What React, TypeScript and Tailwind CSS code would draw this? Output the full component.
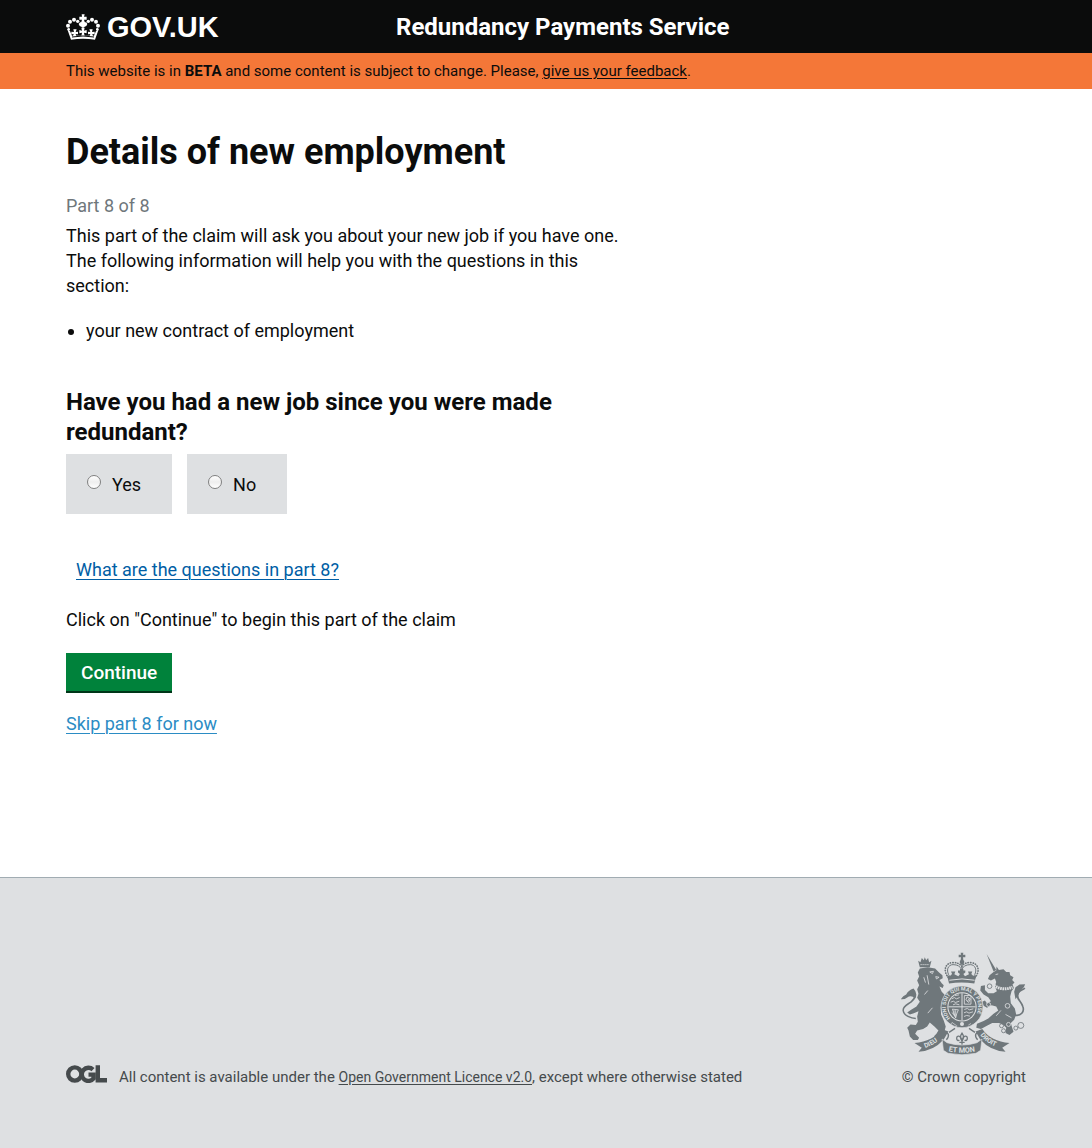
import type { ReactNode } from 'react';

function Crown() {
  return (
    <svg viewBox="0 0 102 78" className="h-[26px] w-[34px] shrink-0" fill="#fff" aria-hidden="true">
      <path d="M47 1h9l-2 7h8v9h-8l3 10h-12l3-10h-8v-9h8z" />
      <path d="M42 25h19l3 5-3 6-5 2-5 4-5-4-5-2-3-6z" />
      {[[35, 22, 5], [24, 17, 6], [12, 23, 6], [6, 35, 6], [8, 46, 4], [67, 22, 5], [78, 17, 6], [90, 23, 6], [96, 35, 6], [94, 46, 4]].map(([x, y, r]) => (
        <circle key={`${x}-${y}`} cx={x} cy={y} r={r} />
      ))}
      <path d="M4 46l8 5 6 14h66l6-14 8-5-11 31q-36-6-72 0z" />
      <path d="M46 41h10l-2 9 8-2v10l-8-2 2 11h-10l2-11-8 2v-10l8 2z" />
      <path d="M22 46h10l-3 8 7-1v8l-7-1 2 6h-10l2-6-7 1v-8l8 1zM80 46h-10l3 8-7-1v8l7-1-2 6h10l-2-6 7 1v-8l-8 1z" />
      <path d="M18 69q33-6 66 0" fill="none" stroke="#0b0c0c" strokeWidth="3" />
    </svg>
  );
}

function OglLogo() {
  return (
    <svg viewBox="0 0 41 18" className="h-[18px] w-[41px] shrink-0" role="img" aria-label="OGL">
      <g fill="none" stroke="#454a4c" strokeWidth="4.4">
        <circle cx="8.8" cy="9" r="6.6" />
        <path d="M27 4.6A6.6 6.6 0 1 0 27.6 13.4V9.6H22.5" />
        <path d="M31.8 0.3V15.2H41" />
      </g>
    </svg>
  );
}

function RoyalArms() {
  return (
    <svg viewBox="18 22 375 310" className="h-[103px] w-[125px]" fill="#6f777b" role="img" aria-label="Royal coat of arms">
      {/* lion */}
      <path d="M74 68l-5-20 7 5 4-13 6 7 3-9 4 9 6-7 3 13 7-5-5 20z" />
      <path d="M76 60h26" stroke="#dee0e2" strokeWidth="2.5" strokeDasharray="4 2" />
      <path d="M74 72L98 68 120 72 132 84 142 92 143 101 133 106 140 116 146 122 143 130 133 126 140 142 150 152 150 162 142 166 137 190 138 210 146 228 152 246 148 262 150 276 128 280 116 276 124 268 130 258 118 246 104 234 96 246 84 254 66 258 60 268 72 280 68 287 54 287 44 276 40 258 36 250 46 240 62 242 68 232 66 216 70 200 56 206 44 210 36 204 48 196 64 186 74 172 66 160 70 148 66 134 72 122 66 108 72 96 68 84z" strokeLinejoin="round" />
      <path d="M62 222c-14 0-36-8-38-24-1-14 14-18 24-26 9-7 14-16 10-27" fill="none" stroke="#6f777b" strokeWidth="4.5" />
      <path d="M17 164q6-10 16-14 6-12 22-18 14 14 5 30-10-10-19-6-12 10-24 8z" />
      <path d="M104 82l11-2-3 7zM122 96l10 2-8 5zM86 98l5 16M96 92l5 28M88 150l10-12M98 206l14-16" fill="none" stroke="#dee0e2" strokeWidth="2.5" />
      {/* unicorn */}
      <path d="M275 28l29 48-8 5z" />
      <path d="M296 82L304 78 305 66 312 76 326 74 334 82 344 82 346 92 356 98 352 106 359 114 353 120 357 130 350 140 346 156 348 176 360 192 364 210 358 226 348 236 352 250 356 262 344 272 332 266 334 250 324 240 312 236 292 236 276 244 258 254 244 250 246 238 266 230 280 222 296 208 310 198 304 186 290 182 276 190 266 184 262 172 270 168 276 176 288 170 280 158 266 150 256 138 258 124 270 122 270 136 280 146 296 146 306 140 300 126 304 112 300 102 288 108 279 103 284 92z" />
      <path d="M360 212c18 4 30-10 24-26-6-18-22-24-14-40 5-10 14-8 20-16" fill="none" stroke="#6f777b" strokeWidth="5" />
      <path d="M362 164l-4-22 4-14 12-8 17-1q-2 8-9 14-10 8-12 20z" />
      <path d="M297 122q24 18 56 6" fill="none" stroke="#dee0e2" strokeWidth="9" strokeDasharray="5 2" />
      <path d="M302 90l8-2M318 198l-14 16M332 210l18 10" stroke="#dee0e2" strokeWidth="2.5" />
      <g fill="none" stroke="#6f777b" strokeWidth="2.5">
        <circle cx="378" cy="243" r="9" /><circle cx="363" cy="251" r="6" /><circle cx="326" cy="259" r="6" />
        <circle cx="320" cy="244" r="6" /><circle cx="284" cy="125" r="7" />
      </g>
      <g fill="none" stroke="#dee0e2" strokeWidth="2.5">
        <circle cx="338" cy="184" r="7" /><circle cx="281" cy="180" r="6" /><circle cx="341" cy="240" r="6" />
      </g>
      {/* royal crown */}
      <path d="M197 24h8l-1 6h7v8h-7l1 8h-8l1-8h-7v-8h7z" />
      <circle cx="201" cy="52" r="7" />
      <g fill="none" stroke="#6f777b" strokeLinecap="round">
        <path d="M160 99c-18-22-8-44 12-45 13-1 22 3 28 11 6-8 15-12 28-11 20 1 30 23 12 45" strokeWidth="5" strokeDasharray="1 6.5" />
        <path d="M164 96c-14-20-4-36 10-36 14 0 22 6 26 15 4-9 12-15 26-15 14 0 24 16 10 36" strokeWidth="3" />
        <path d="M201 60v34" strokeWidth="5" strokeDasharray="1 6" />
      </g>
      <path d="M156 92l8 3 7-7-3-7h13l-3 8 12 6 5-7-6-4v-6h6v-5h10v5h6v6l-6 4 5 7 12-6-3-8h13l-3 7 7 7 8-3-6 25q-39-7-76 0z" />
      <path d="M163 107q38-8 76 0" fill="none" stroke="#dee0e2" strokeWidth="3" />
      {/* garter and shield */}
      <circle cx="201" cy="187" r="63" stroke="#dee0e2" strokeWidth="2" />
      <circle cx="201" cy="187" r="44" fill="#dee0e2" />
      <circle cx="201" cy="187" r="41" />
      <path id="garter" d="M166 221A49 49 0 1 1 236 221" fill="none" />
      <text className="font-[Roboto] text-[16px] font-bold" fill="#dee0e2">
        <textPath href="#garter">HONI SOIT QUI MAL Y PENSE</textPath>
      </text>
      <path d="M201 146v82M160 187h82" stroke="#dee0e2" strokeWidth="3" />
      <g fill="none" stroke="#dee0e2" strokeWidth="2.5">
        <path d="M170 163l8-4 6 4 10-4M167 173l8-3 6 4 12-4M174 181l8-3 11 3M180 153l12-2" />
        <path d="M208 153h20v26h-20zM216 157l-3 9 8 8 5-11zM217 171l6-9" />
        <path d="M172 194l18 2q-6 12-8 24zM177 197v16M182 197v18M170 204q8 4 12 16" />
        <path d="M208 195l9-3 6 4 12-3M207 205l8-3 7 4 12-4M207 216l8-3 10 2" />
      </g>
      <circle cx="201" cy="239" r="6" fill="#dee0e2" />
      <path d="M171 234l14 10-5 6-14-9zM220 242l8-5" stroke="#dee0e2" strokeWidth="2" fill="none" />
      {/* thistle, rose and motto ribbon */}
      <g fill="none" stroke="#6f777b" strokeWidth="4">
        <path d="M201 266q-9 12 0 24 9-12 0-24zM200 286c-3-13-15-14-15-4 0 6 5 8 8 5M202 286c3-13 15-14 15-4 0 6-5 8-8 5M201 288v14M193 294h16" />
        <path d="M148 264c14 0 16 10 6 22M254 264c-14 0-16 10-6 22M162 264l18-12M240 264l-18-12" />
      </g>
      <path d="M58 296q56-4 82-42l20 7-14 24q-30 34-76 37l10-12z" />
      <path d="M344 296q-56-4-82-42l-20 7 14 24q30 34 76 37l-10-12z" />
      <path d="M141 284l15 11q45 14 90 0l15-11-4 34-14 9q-42 9-84 0l-14-9z" stroke="#dee0e2" strokeWidth="2" />
      <path id="dieu" d="M90 311Q126 298 148 270" fill="none" />
      <path id="droit" d="M256 272Q278 302 322 312" fill="none" />
      <path id="etmon" d="M160 321Q201 329 243 321" fill="none" />
      <g className="font-[Roboto] text-[20px] font-bold" fill="#dee0e2">
        <text><textPath href="#dieu">DIEU</textPath></text>
        <text><textPath href="#droit">DROIT</textPath></text>
        <text className="text-[22px]"><textPath href="#etmon">ET MON</textPath></text>
      </g>
    </svg>
  );
}

function Container({ children, className = '' }: { children: ReactNode; className?: string }) {
  return <div className={`mx-auto max-w-[960px] ${className}`}>{children}</div>;
}

function Option({ id, label }: { id: string; label: string }) {
  return (
    <label htmlFor={id} className="flex h-[60px] cursor-pointer items-center bg-[#dee0e2] pr-[31px] pl-[21px]">
      <input
        id={id}
        type="radio"
        name="new-job"
        value={id}
        className="mr-[11px] mb-1 size-3.5 appearance-none rounded-full border border-[#808080] bg-linear-to-b from-white via-[#eeeeee] to-white checked:border-[5px] checked:border-[#0b0c0c]"
      />
      {label}
    </label>
  );
}

export default function App() {
  return (
    <div className="flex min-h-screen flex-col bg-white font-[Roboto,sans-serif] text-[18px] leading-[25px] text-[#0b0c0c]">
      <header>
        <div className="bg-[#0b0c0c] px-4 text-white">
          <Container className="flex h-[53px] items-center">
            <a href="#home" className="flex w-[330px] items-center gap-[7px] font-['Liberation_Sans',sans-serif] text-[29px] leading-[30px] font-bold">
              <Crown />
              GOV.UK
            </a>
            <a href="#service" className="text-[24px] leading-[30px] font-bold">
              Redundancy Payments Service
            </a>
          </Container>
        </div>
        <div className="bg-[#f47738] px-4">
          <Container className="py-2 text-[15px] leading-5">
            This website is in <strong>BETA</strong> and some content is subject to change. Please,{' '}
            <a href="#feedback" className="underline underline-offset-2">give us your feedback</a>.
          </Container>
        </div>
      </header>

      <main className="grow px-4 pt-[43px] pb-[141px]">
        <Container>
          <h1 className="text-[36px] leading-10 font-bold">Details of new employment</h1>
          <p className="mt-[21px] text-[#6f777b]">Part 8 of 8</p>
          <p className="mt-[5px] max-w-[560px]">
            This part of the claim will ask you about your new job if you have one. The following information will help
            you with the questions in this section:
          </p>
          <ul className="mt-5 list-disc pl-5">
            <li>your new contract of employment</li>
          </ul>
          <form>
            <fieldset className="mt-11">
              <legend className="mb-[7px] max-w-[560px] text-[24px] leading-[30px] font-bold">
                Have you had a new job since you were made redundant?
              </legend>
              <div className="flex gap-[15px]">
                <Option id="yes" label="Yes" />
                <Option id="no" label="No" />
              </div>
            </fieldset>
            <p className="mt-[43px] pl-2.5">
              <a href="#questions" className="text-[#005ea5] underline decoration-1 underline-offset-3">What are the questions in part 8?</a>
            </p>
            <p className="mt-[25px]">Click on "Continue" to begin this part of the claim</p>
            <button type="button" className="mt-[21px] block h-[38px] bg-[#00823b] px-[15px] pt-px text-[19px] font-medium text-white shadow-[0_2px_0_#003618]">
              Continue
            </button>
          </form>
          <p className="mt-5">
            <a href="#skip" className="text-[#2b8cc4] underline decoration-1 underline-offset-3">Skip part 8 for now</a>
          </p>
        </Container>
      </main>

      <footer className="border-t border-[#a1acb2] bg-[#dee0e2] px-4 pt-[74px] pb-[61px] text-[#454a4c]">
        <Container className="flex items-end justify-between text-[15px] leading-5">
          <div className="flex items-end gap-3">
            <div className="pb-1">
              <OglLogo />
            </div>
            <p>
              All content is available under the{' '}
              <a href="#licence" className="text-[14px] underline underline-offset-2">Open Government Licence v2.0</a>, except where otherwise
              stated
            </p>
          </div>
          <a href="#copyright" className="flex flex-col items-end gap-3">
            <RoyalArms />
            © Crown copyright
          </a>
        </Container>
      </footer>
    </div>
  );
}
